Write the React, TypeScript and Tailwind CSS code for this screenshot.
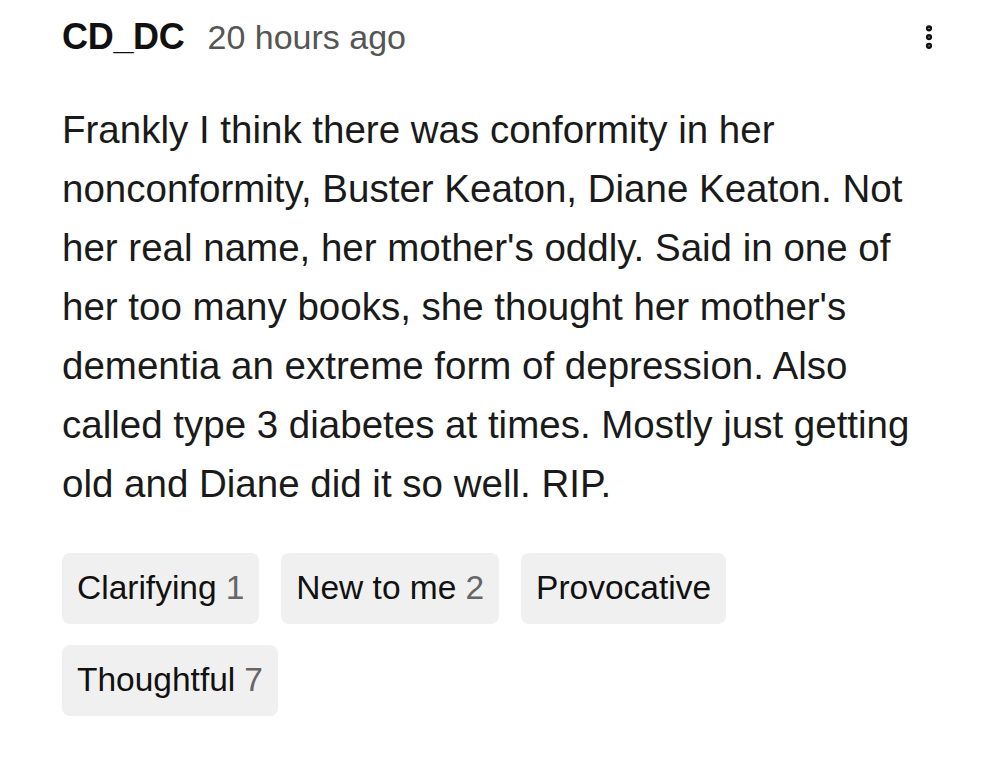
import { MoreVertical } from "lucide-react";

const reactions = [
  { label: "Clarifying", count: 1 },
  { label: "New to me", count: 2 },
  { label: "Provocative", count: null },
  { label: "Thoughtful", count: 7 },
];

const lines = [
  "Frankly I think there was conformity in her",
  "nonconformity, Buster Keaton, Diane Keaton. Not",
  "her real name, her mother's oddly. Said in one of",
  "her too many books, she thought her mother's",
  "dementia an extreme form of depression. Also",
  "called type 3 diabetes at times. Mostly just getting",
  "old and Diane did it so well. RIP.",
];

export default function App() {
  return (
    <div className="w-[1000px] h-[766px] bg-white font-['Liberation_Sans',sans-serif] text-[#111]">
      <div className="pl-[62px] pr-[56px] pt-[14px]">
        <div className="flex items-center h-[46px]">
          <span className="text-[36px] font-bold tracking-[-0.3px]">CD_DC</span>
          <span className="ml-[23px] text-[34px] text-[#555]">20 hours ago</span>
          <button className="ml-auto text-[#111]">
            <MoreVertical size={30} strokeWidth={3} />
          </button>
        </div>

        <p className="mt-[40px] text-[38.5px] leading-[59px] text-[#1a1a1a] whitespace-nowrap">
          {lines.map((l, i) => (
            <span key={i} className="block">
              {l}
            </span>
          ))}
        </p>

        <div className="mt-[40px] flex flex-wrap gap-x-[22px] gap-y-[21px] w-[700px]">
          {reactions.map((r) => (
            <div
              key={r.label}
              className="h-[71px] px-[15px] flex items-center rounded-[8px] bg-[#f0f0f0] text-[33.5px] text-[#111]"
            >
              {r.label}
              {r.count !== null && <span className="ml-[9px] text-[#666]">{r.count}</span>}
            </div>
          ))}
        </div>
      </div>
    </div>
  );
}
